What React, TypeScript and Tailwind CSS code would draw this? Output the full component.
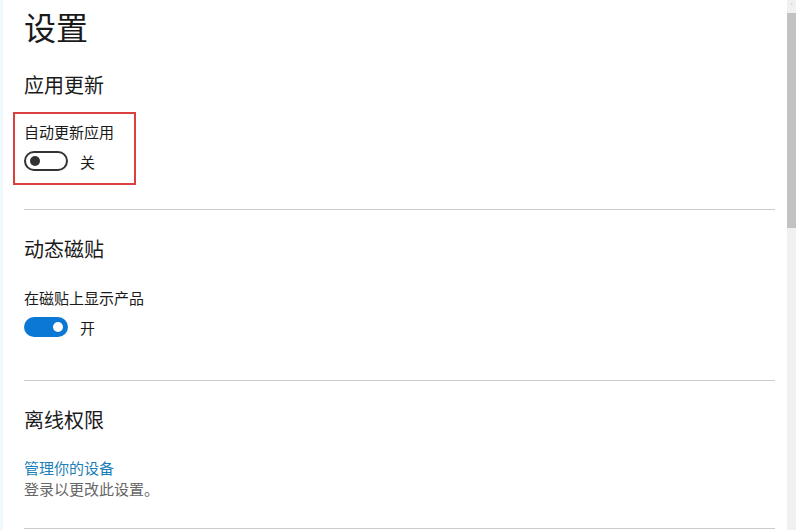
export default function App() {
  const font = { fontFamily: '"Noto Sans CJK SC", "Noto Sans", sans-serif' };
  return (
    <div className="flex h-[530px] w-[796px] overflow-hidden bg-white text-[#1a1a1a]" style={font}>
      {/* faint window edge */}
      <div className="w-[3px] shrink-0 bg-[#eef9fb]" />
      <div className="flex-1 pl-[21px] pr-[12px]">
        <h1 className="pt-[10px] text-[32px] font-normal leading-none">设置</h1>

        <h2 className="mt-[33px] text-[20px] font-normal leading-none">应用更新</h2>
        <div className="relative">
          <span className="pointer-events-none absolute left-[-11px] top-[17px] h-[73px] w-[123px] border-2 border-[#d9403f]" />
          <p className="pt-[29px] text-[15px] leading-none">自动更新应用</p>
          <div className="mt-[12px] flex items-center gap-[12px]">
            <span className="flex h-[20px] w-[44px] items-center rounded-full border-2 border-[#333] pl-[4px]">
              <span className="h-[10px] w-[10px] rounded-full bg-[#333]" />
            </span>
            <span className="text-[15px] leading-none">关</span>
          </div>
        </div>
        <div className="mt-[38px] h-px bg-[#cccccc]" />

        <h2 className="mt-[29px] text-[20px] font-normal leading-none">动态磁贴</h2>
        <p className="mt-[31px] text-[15px] leading-none">在磁贴上显示产品</p>
        <div className="mt-[12px] flex items-center gap-[12px]">
          <span className="flex h-[20px] w-[44px] items-center justify-end rounded-full bg-[#0a78d4] pr-[5px]">
            <span className="h-[10px] w-[10px] rounded-full bg-white" />
          </span>
          <span className="text-[15px] leading-none">开</span>
        </div>
        <div className="mt-[43px] h-px bg-[#cccccc]" />

        <h2 className="mt-[29px] text-[20px] font-normal leading-none">离线权限</h2>
        <p className="mt-[30px] text-[15px] leading-none text-[#1d7fb8]">管理你的设备</p>
        <p className="mt-[6px] text-[15px] leading-none text-[#666666]">登录以更改此设置。</p>
        <div className="mt-[32px] h-px bg-[#cccccc]" />
      </div>

      {/* scrollbar */}
      <div className="flex w-[9px] shrink-0 flex-col bg-[#f0f0f0]">
        <div className="flex h-[13px] items-center justify-center text-[7px] leading-none text-[#888]">˄</div>
        <div className="h-[215px] bg-[#c2c2c2]" />
      </div>
    </div>
  );
}
